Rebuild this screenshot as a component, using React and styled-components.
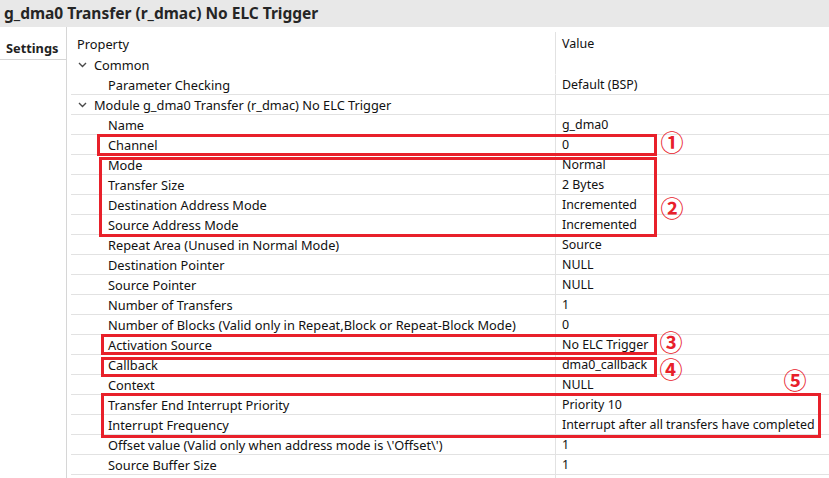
import React from 'react'
import styled, { createGlobalStyle } from 'styled-components'

const GlobalStyle = createGlobalStyle`
     html, body {
          margin: 0;
          padding: 0;
          background: #ffffff;
     }
     body {
          font-family: "Noto Sans", "Noto Sans CJK SC", sans-serif;
          color: #111111;
     }
`

const Page = styled.div`
     position: relative;
     width: 829px;
     height: 478px;
     overflow: hidden;
     background: #ffffff;
`

const TitleBar = styled.div`
     height: 27px;
     line-height: 26px;
     padding-left: 4px;
     background: #e8e8e8;
     color: #252525;
     font-size: 15.5px;
     font-weight: 700;
     white-space: nowrap;
`

const Body = styled.div`
     display: flex;
     height: 451px;
`

const SideTabs = styled.div`
     width: 66px;
     flex: none;
     border-right: 1px solid #d6d6d6;
`

const Tab = styled.div`
     height: 33px;
     box-sizing: border-box;
     padding-top: 12px;
     line-height: 18px;
     padding-left: 6px;
     border-bottom: 1px solid #d6d6d6;
     font-size: 12.8px;
     font-weight: 700;
     color: #222222;
`

const TableArea = styled.div`
     flex: 1;
     padding-left: 4px;
`

const Grid = styled.div`
     display: grid;
     grid-template-columns: 484px 1fr;
     font-size: 12.8px;
`

const HeaderCell = styled.div`
     height: 28px;
     box-sizing: border-box;
     padding-top: 8px;
     padding-left: 6px;
     line-height: 18px;
     ${ p => p.$value && `
          margin-top: 5px;
          height: 23px;
          padding-top: 3px;
          font-size: 12.5px;
          border-left: 1px solid #e2e2e2;
     ` }
`

const Cell = styled.div`
     height: 20px;
     box-sizing: border-box;
     padding-top: 1px;
     border-bottom: ${ p => p.$noLine ? '1px solid transparent' : '1px solid #e2e2e2' };
     display: flex;
     align-items: center;
     line-height: 18px;
     white-space: nowrap;
     padding-left: ${ p => p.$indent }px;
     ${ p => p.$value && `
          border-left: 1px solid #e2e2e2;
          font-size: 12.4px;
     ` }
`

const Chevron = styled.svg`
     width: 9px;
     height: 6px;
     margin-right: 7px;
     flex: none;
`

const RedBox = styled.div`
     position: absolute;
     box-sizing: border-box;
     border: 3px solid #e8202a;
     pointer-events: none;
`

const Mark = styled.div`
     position: absolute;
     width: 24px;
     height: 20px;
     margin-left: -12px;
     margin-top: -10px;
     display: flex;
     align-items: center;
     justify-content: center;
     color: #e8202a;
     font-family: "Noto Sans CJK SC", sans-serif;
     font-size: 23px;
     font-weight: 700;
     line-height: 20px;
`

const rows = [
     { name: 'Common', group: true, value: '', noLine: true },
     { name: 'Parameter Checking', value: 'Default (BSP)' },
     { name: 'Module g_dma0 Transfer (r_dmac) No ELC Trigger', group: true, value: '' },
     { name: 'Name', value: 'g_dma0' },
     { name: 'Channel', value: '0' },
     { name: 'Mode', value: 'Normal' },
     { name: 'Transfer Size', value: '2 Bytes' },
     { name: 'Destination Address Mode', value: 'Incremented' },
     { name: 'Source Address Mode', value: 'Incremented' },
     { name: 'Repeat Area (Unused in Normal Mode)', value: 'Source' },
     { name: 'Destination Pointer', value: 'NULL' },
     { name: 'Source Pointer', value: 'NULL' },
     { name: 'Number of Transfers', value: '1' },
     { name: 'Number of Blocks (Valid only in Repeat,Block or Repeat-Block Mode)', value: '0' },
     { name: 'Activation Source', value: 'No ELC Trigger' },
     { name: 'Callback', value: 'dma0_callback' },
     { name: 'Context', value: 'NULL' },
     { name: 'Transfer End Interrupt Priority', value: 'Priority 10' },
     { name: 'Interrupt Frequency', value: 'Interrupt after all transfers have completed' },
     { name: "Offset value (Valid only when address mode is \\'Offset\\')", value: '1' },
     { name: 'Source Buffer Size', value: '1' },
     { name: '', value: '' },
]

const boxes = [
     { left: 97, top: 134, width: 560, height: 22 },
     { left: 99, top: 157, width: 558, height: 80 },
     { left: 101, top: 334, width: 556, height: 21 },
     { left: 101, top: 357, width: 556, height: 20 },
     { left: 101, top: 393, width: 720, height: 45 },
]

const marks = [
     { x: 672, y: 141, text: '①' },
     { x: 672, y: 207, text: '②' },
     { x: 671, y: 341, text: '③' },
     { x: 671, y: 368, text: '④' },
     { x: 795, y: 379, text: '⑤' },
]

const ChevronIcon = () => (
     <Chevron viewBox="0 0 9 6">
          <polyline points="1,1 4.5,4.5 8,1" fill="none" stroke="#4a4a4a" strokeWidth="1.4" />
     </Chevron>
)

const App = () => {
     return (
          <Page>
               <GlobalStyle />
               <TitleBar>g_dma0 Transfer (r_dmac) No ELC Trigger</TitleBar>
               <Body>
                    <SideTabs>
                         <Tab>Settings</Tab>
                    </SideTabs>
                    <TableArea>
                         <Grid>
                              <HeaderCell>Property</HeaderCell>
                              <HeaderCell $value>Value</HeaderCell>
                              {rows.map((row, i) => (
                                   <React.Fragment key={i}>
                                        <Cell $indent={row.group ? 7 : 37} $noLine={row.noLine}>
                                             {row.group && <ChevronIcon />}
                                             {row.name}
                                        </Cell>
                                        <Cell $value $indent={6} $noLine={row.noLine}>{row.value}</Cell>
                                   </React.Fragment>
                              ))}
                         </Grid>
                    </TableArea>
               </Body>
               {boxes.map((b, i) => (
                    <RedBox key={i} style={{ left: b.left, top: b.top, width: b.width, height: b.height }} />
               ))}
               {marks.map((m, i) => (
                    <Mark key={i} style={{ left: m.x, top: m.y }}>{m.text}</Mark>
               ))}
          </Page>
     )
}

export default App
